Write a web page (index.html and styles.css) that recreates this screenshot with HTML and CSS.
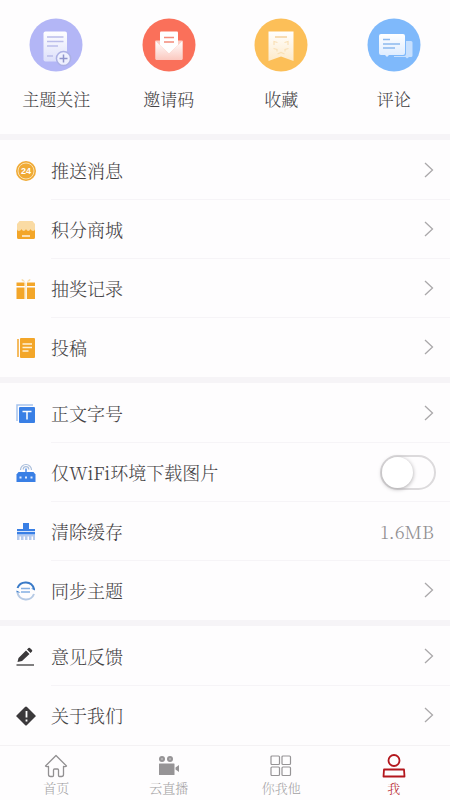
FILE: index.html
```html
<!DOCTYPE html>
<html lang="zh-CN">
<head>
<meta charset="utf-8">
<meta name="viewport" content="width=device-width, initial-scale=1">
<title>我</title>
<link rel="stylesheet" href="styles.css">
</head>
<body>
<svg class="defs" aria-hidden="true">
  <defs>
    <linearGradient id="g-violet" x1="0" y1="0" x2="0" y2="1"><stop offset="0" stop-color="#fff"/><stop offset="1" stop-color="#dcdffa"/></linearGradient>
    <linearGradient id="g-red" x1="0" y1="0" x2="0" y2="1"><stop offset="0" stop-color="#fff"/><stop offset="1" stop-color="#fbc8bf"/></linearGradient>
    <linearGradient id="g-amber" x1="0" y1="0" x2="0" y2="1"><stop offset="0" stop-color="#fff"/><stop offset="1" stop-color="#fdeac9"/></linearGradient>
    <linearGradient id="g-blue" x1="0" y1="0" x2="0" y2="1"><stop offset="0" stop-color="#fff"/><stop offset="1" stop-color="#dcebff"/></linearGradient>
    <symbol id="chevron" viewBox="0 0 10 16"><path d="M1 1l7.500 7L1 15" fill="none" stroke="#aaa8aa" stroke-width="1.300"/></symbol>
  </defs>
</svg>
<main>
  <nav class="shortcuts" aria-label="快捷入口">
    <a class="shortcut" href="#topics">
      <svg class="badge-icon" viewBox="0 0 54 54">
        <circle cx="27" cy="27" r="26.500" fill="#b3b6f6"/>
        <rect x="14.500" y="13.500" width="23.500" height="30" rx="2" fill="url(#g-violet)"/>
        <path d="M18 19h16.500M18 23.500h16.500M18 28h11M18 38h6" stroke="#babdea" stroke-width="1.400"/>
        <circle cx="34.500" cy="40.500" r="7.800" fill="#abb0e4"/>
        <circle cx="34.500" cy="40.500" r="6.300" fill="#eef0fe"/>
        <path d="M30.500 40.500h8M34.500 36.500v8" stroke="#8f94cc" stroke-width="1.500"/>
      </svg>
      <span>主题关注</span>
    </a>
    <a class="shortcut" href="#invite">
      <svg class="badge-icon" viewBox="0 0 54 54">
        <circle cx="27" cy="27" r="26.500" fill="#fa705a"/>
        <path d="M13.500 22.500h27v18a1.500 1.500 0 0 1-1.500 1.500H15a1.500 1.500 0 0 1-1.500-1.500z" fill="#fccfc6"/>
        <path d="M13.500 23l13.500 13 13.500-13v17.500a1.500 1.500 0 0 1-1.500 1.500H15a1.500 1.500 0 0 1-1.500-1.500z" fill="url(#g-red)"/>
        <path d="M18 27V14.500a1 1 0 0 1 1-1h16a1 1 0 0 1 1 1V27l-9 8.500z" fill="#fff"/>
        <path d="M22 19.500h10M22 24h10" stroke="#f48b7a" stroke-width="1.400"/>
      </svg>
      <span>邀请码</span>
    </a>
    <a class="shortcut" href="#favorites">
      <svg class="badge-icon" viewBox="0 0 54 54">
        <circle cx="27" cy="27" r="26.500" fill="#fcbf58"/>
        <path d="M14.500 13.500h25v29.500L27 38.500 14.500 43z" fill="url(#g-amber)"/>
        <path d="M21 19h12" stroke="#f4cf98" stroke-width="1.400"/>
        <path d="M20 27v-3.500l3.500 1M34 27v-3.500l-3.500 1M19.500 30.500l3.500 1v2M34.500 30.500l-3.500 1v2M23.500 36l3.500-1.500 3.500 1.500" fill="none" stroke="#f9e0b6" stroke-width="1.200"/>
      </svg>
      <span>收藏</span>
    </a>
    <a class="shortcut" href="#comments">
      <svg class="badge-icon" viewBox="0 0 54 54">
        <circle cx="27" cy="27" r="26.500" fill="#7fb9fb"/>
        <path d="M39 23h5a1.500 1.500 0 0 1 1.500 1.500v13A1.500 1.500 0 0 1 44 39h-2l-2 1.500-1.500-1.500H27v-1h10a2 2 0 0 0 2-2z" fill="#c7e0fe"/>
        <path d="M14 16h22a2 2 0 0 1 2 2v17a2 2 0 0 1-2 2H22l-2 2-2-2h-4a2 2 0 0 1-2-2V18a2 2 0 0 1 2-2z" fill="url(#g-blue)"/>
        <path d="M16 21.500h7M16 26h17M16 30h12" stroke="#8cb9ee" stroke-width="1.400"/>
      </svg>
      <span>评论</span>
    </a>
  </nav>

  <section class="group">
    <a class="row" href="#push">
      <svg class="row-icon" viewBox="0 0 20 20"><circle cx="10" cy="10" r="10" fill="#f0aa35"/><circle cx="10" cy="10" r="8" fill="none" stroke="#fbe0ad" stroke-width="1"/><text class="coin-text" x="10" y="13" text-anchor="middle">24</text></svg>
      <span class="row-body"><span>推送消息</span><svg class="chevron"><use href="#chevron"/></svg></span>
    </a>
    <a class="row" href="#mall">
      <svg class="row-icon" viewBox="0 0 20 20"><path d="M3.500 1h13L19 4v7H1V4z" fill="#fadba4"/><path d="M1 9c0 2.500 3.500 2.500 4.500 0 1 2.500 3.500 2.500 4.500 0 1 2.500 3.500 2.500 4.500 0 1 2.500 4.500 2.500 4.500 0v8.500a1.500 1.500 0 0 1-1.500 1.500h-15A1.500 1.500 0 0 1 1 17.500z" fill="#f3a629"/><path d="M6 16h8" stroke="#fff" stroke-width="1.300"/></svg>
      <span class="row-body"><span>积分商城</span><svg class="chevron"><use href="#chevron"/></svg></span>
    </a>
    <a class="row" href="#draws">
      <svg class="row-icon" viewBox="0 0 20 20"><path d="M9 3C7-1 4.500-.5 6 2zM11 3c2-4 4.500-3.500 3-1z" fill="#f8dfaf"/><path d="M.5 3.500h8V7h-8zM11 3.500h8V7h-8zM.5 8.500h8V20h-8zM11 8.500h8V20h-8z" fill="#f3a629"/><path d="M9 3.500h1.500V20H9z" fill="#fcebcb"/></svg>
      <span class="row-body"><span>抽奖记录</span><svg class="chevron"><use href="#chevron"/></svg></span>
    </a>
    <a class="row" href="#submit">
      <svg class="row-icon" viewBox="0 0 20 20"><path d="M1 1h2v18H1z" fill="#f5bb60"/><rect x="4" y="0" width="15" height="20" rx="1" fill="#f3a629"/><path d="M6.500 6h9.500M6.500 9.500h9.500M6.500 13h6" stroke="#fff1d6" stroke-width="1.300"/></svg>
      <span class="row-body"><span>投稿</span><svg class="chevron"><use href="#chevron"/></svg></span>
    </a>
  </section>

  <section class="group">
    <a class="row" href="#font">
      <svg class="row-icon" viewBox="0 0 20 20"><path d="M1 17V1h16" fill="none" stroke="#a6c4ee" stroke-width="1.500"/><rect x="3" y="3" width="16" height="16" rx="1" fill="#397fe5"/><path d="M6.500 7.500h9M11 7.500v8" stroke="#fff" stroke-width="1.500"/></svg>
      <span class="row-body"><span>正文字号</span><svg class="chevron"><use href="#chevron"/></svg></span>
    </a>
    <div class="row">
      <svg class="row-icon" viewBox="0 0 20 20"><path d="M4.500 7a5.500 5.500 0 1 1 11 0M7.200 6.500a2.800 2.800 0 0 1 5.600 0" fill="none" stroke="#a8bddb" stroke-width="1.200"/><path d="M10 5.500v4" stroke="#397fe5" stroke-width="1.300"/><path d="M2.500 9h15l2 2.500V19H.5v-7.500z" fill="#397fe5"/><path d="M3.500 14.500h2M9 14.500h2M14.500 14.500h2" stroke="#dfeaff" stroke-width="1.800"/></svg>
      <span class="row-body"><label for="wifi-only">仅WiFi环境下载图片</label><input class="switch" id="wifi-only" type="checkbox" role="switch"></span>
    </div>
    <a class="row" href="#cache">
      <svg class="row-icon" viewBox="0 0 20 20"><path d="M7 1h6v6h6v5.500H1V7h6z" fill="#397fe5"/><path d="M1 9.500h18" stroke="#d6e4fb" stroke-width="1"/><path d="M1 13h18v1.500H1zM1 14h2.500v4H1zM5 14h2.500v4H5zM9 14h2.500v4H9zM13 14h2.500v4H13zM17 14h2v4h-2z" fill="#b5caed"/></svg>
      <span class="row-body"><span>清除缓存</span><span class="value">1.6MB</span></span>
    </a>
    <a class="row" href="#sync">
      <svg class="row-icon" viewBox="0 0 20 20"><path d="M1.500 7a8.700 8.700 0 0 1 16.500 1" fill="none" stroke="#397ac8" stroke-width="2"/><path d="M1.500 12a8.700 8.700 0 0 0 16.500 1" fill="none" stroke="#b5c9e4" stroke-width="2"/><path d="M15 7.500h4v2zM4.500 11.500h-4v-2z" fill="#397ac8"/><path d="M5 7.500h9M5 11h9" stroke="#84aee2" stroke-width="1.300"/></svg>
      <span class="row-body"><span>同步主题</span><svg class="chevron"><use href="#chevron"/></svg></span>
    </a>
  </section>

  <section class="group">
    <a class="row" href="#feedback">
      <svg class="row-icon" viewBox="0 0 20 20"><path d="M1.500 15l1-4L10 3.500l3.500 3.500L6 14zM11 2.500L12.500 1q.7-.5 1.400 0L16 3.100q.6.700 0 1.400L14.500 6z" fill="#3b393b"/><path d="M.5 18h17.500" stroke="#565456" stroke-width="1.500"/></svg>
      <span class="row-body"><span>意见反馈</span><svg class="chevron"><use href="#chevron"/></svg></span>
    </a>
    <a class="row" href="#about">
      <svg class="row-icon" viewBox="0 0 20 20"><path d="M10 .5q.5 0 1 .5l8.500 8.500q.5.500 0 1L11 19q-1 1-2 0L.5 10.500q-.5-.5 0-1L9 1q.5-.5 1-.5z" fill="#3b393b"/><path d="M10.500 5v6.500M10.500 13.500v2" stroke="#fff" stroke-width="1.800"/></svg>
      <span class="row-body"><span>关于我们</span><svg class="chevron"><use href="#chevron"/></svg></span>
    </a>
  </section>
</main>

<nav class="tabs" aria-label="主导航">
  <a class="tab" href="#home">
    <svg class="tab-icon" viewBox="0 0 24 24"><path d="M1.500 12L12 1.500 22.500 12q-.5 1-3 .5v8q0 2-2 2h-2q-1 0-1-1v-5.500q0-1-1-1h-3q-1 0-1 1v5.500q0 1-1 1h-2q-2 0-2-2v-8q-2.500.5-3-.5z" fill="none" stroke="#929092" stroke-width="1.300" stroke-linejoin="round"/></svg>
    <span>首页</span>
  </a>
  <a class="tab" href="#live">
    <svg class="tab-icon" viewBox="0 0 24 24"><g fill="#969496"><circle cx="5" cy="5" r="3"/><circle cx="13" cy="5" r="3"/><rect x="2" y="9.500" width="15.500" height="11.500" rx=".5"/><path d="M18.500 13.500l3.500-2.500v7l-3.500-2.500z"/></g><circle cx="5" cy="5" r=".8" fill="#d8d6d8"/><circle cx="13" cy="5" r=".8" fill="#d8d6d8"/></svg>
    <span>云直播</span>
  </a>
  <a class="tab" href="#community">
    <svg class="tab-icon" viewBox="0 0 24 24"><g fill="none" stroke="#969496" stroke-width="1.200"><rect x="2" y="2" width="8.500" height="8.500" rx="1"/><rect x="13" y="2" width="8.500" height="8.500" rx="1"/><rect x="2" y="13" width="8.500" height="8.500" rx="1"/><rect x="13" y="13" width="8.500" height="8.500" rx="1"/></g></svg>
    <span>你我他</span>
  </a>
  <a class="tab tab-current" href="#me" aria-current="page">
    <svg class="tab-icon" viewBox="0 0 24 24"><g fill="none" stroke="#b3171d" stroke-width="1.800"><circle cx="12" cy="6.500" r="5.500"/><path d="M2 15.500h20l.5 7h-21z" stroke-linejoin="round"/></g></svg>
    <span>我</span>
  </a>
</nav>
</body>
</html>
```
FILE: styles.css
```css
* {
  box-sizing: border-box;
}

body {
  margin: 0;
  min-height: 100vh;
  display: flex;
  flex-direction: column;
  background: #fefdfe;
  color: #444244;
  font-family: "Noto Serif CJK SC", "Liberation Serif", "Noto Sans CJK SC", serif;
  font-weight: 300;
  font-size: 18px;
  line-height: 26px;
}

main {
  flex: 1;
}

a {
  color: inherit;
  text-decoration: none;
}

.defs {
  position: absolute;
  width: 0;
  height: 0;
}

.shortcuts {
  display: grid;
  grid-template-columns: repeat(4, 1fr);
  padding: 18px 0 22px;
}

.shortcut {
  display: flex;
  flex-direction: column;
  align-items: center;
  gap: 14px;
  font-size: 17px;
}

.badge-icon {
  width: 54px;
  height: 54px;
}

.group {
  padding-top: 1px;
  border-top: 6px solid #f6f4f7;
}

.row {
  display: flex;
  align-items: center;
  gap: 15px;
  height: 59px;
  padding-left: 16px;
}

.row-icon {
  flex: none;
  width: 20px;
  height: 20px;
}

.row-body {
  flex: 1;
  align-self: stretch;
  display: flex;
  align-items: center;
  justify-content: space-between;
  padding-right: 16px;
  border-bottom: 1px solid #f6f4f7;
}

.row:last-child .row-body {
  border-bottom-color: transparent;
}

.coin-text {
  fill: #fff;
  font: 700 9px "Liberation Sans", sans-serif;
}

.chevron {
  width: 10px;
  height: 16px;
}

.value {
  color: #929092;
}

.switch {
  appearance: none;
  width: 56px;
  height: 35px;
  margin: 0 -2px 0 0;
  border: 2px solid #dcdadc;
  border-radius: 18px;
  background: #fefdfe;
}

.switch::before {
  content: "";
  display: block;
  width: 31px;
  height: 31px;
  border-radius: 50%;
  background: #fff;
  box-shadow: 0 1px 4px #a8a6a8;
}

.switch:checked::before {
  margin-left: auto;
}

.tabs {
  display: grid;
  grid-template-columns: repeat(4, 1fr);
  padding: 8px 0 4px;
  border-top: 1px solid #f4f2f4;
}

.tab {
  display: flex;
  flex-direction: column;
  align-items: center;
  gap: 2px;
  color: #a3a1a3;
  font-size: 13px;
  line-height: 16px;
}

.tab-current {
  color: #b3171d;
}

.tab-icon {
  width: 24px;
  height: 24px;
}
```
